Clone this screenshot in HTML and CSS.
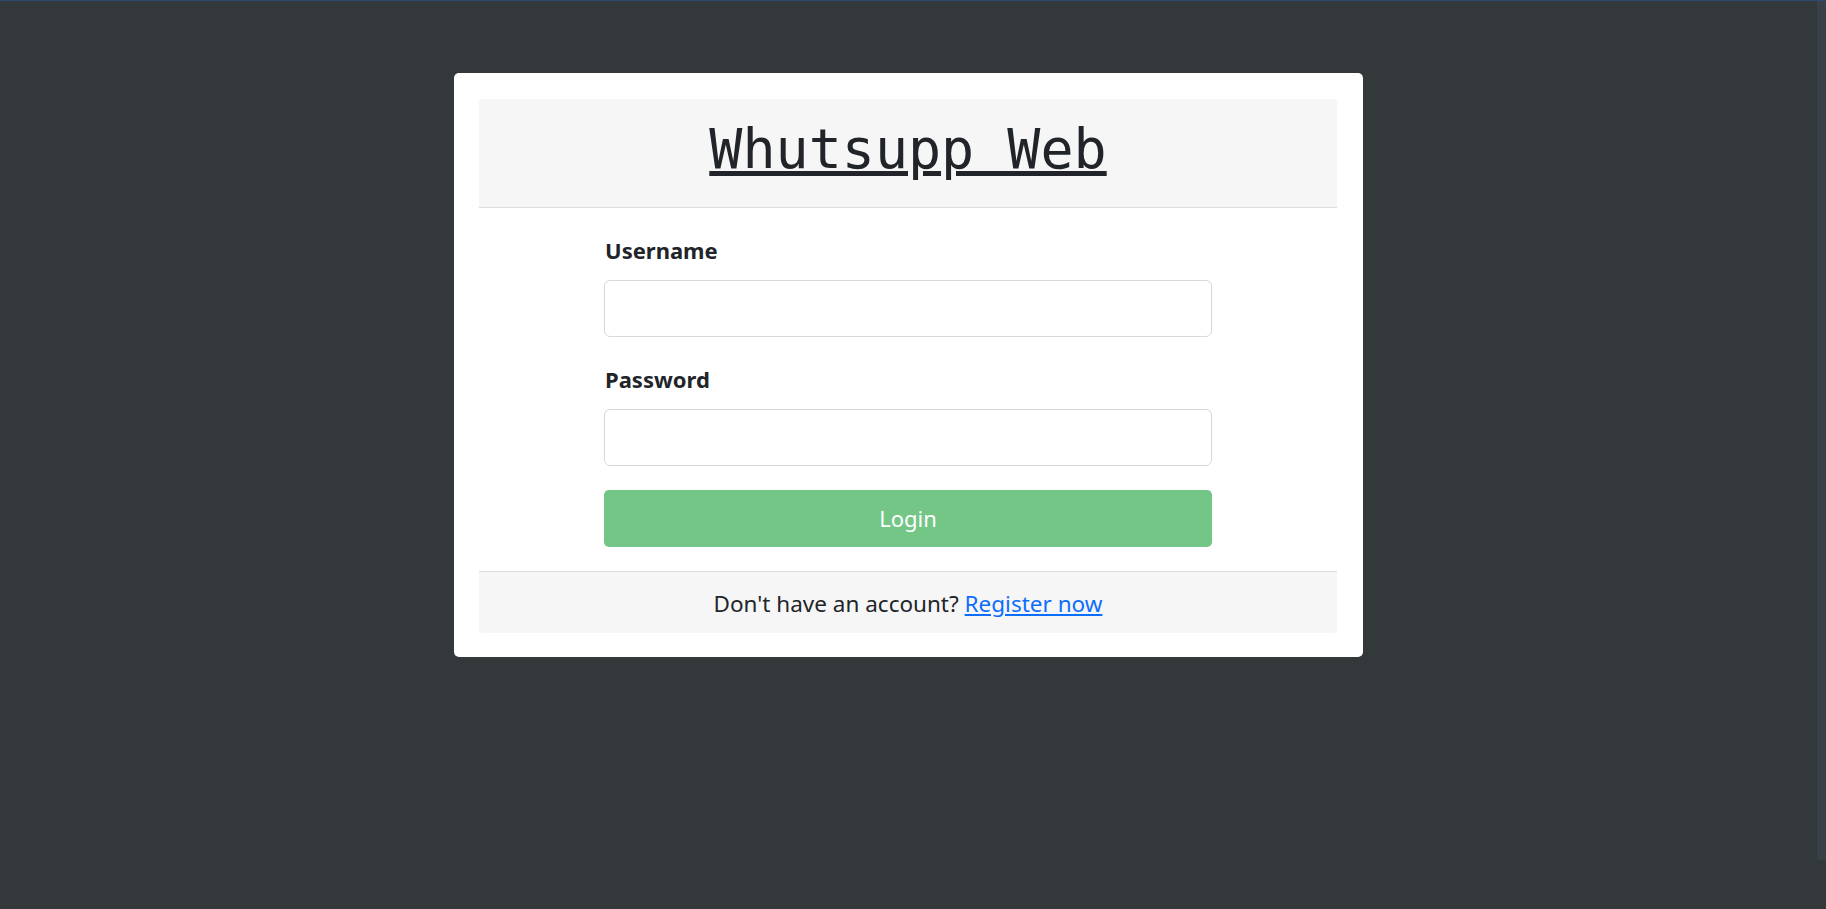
FILE: index.html
```html
<!DOCTYPE html>
<html lang="en">
<head>
<meta charset="utf-8">
<title>Whutsupp Web</title>
<link rel="stylesheet" href="styles.css">
</head>
<body>
<div class="topline"></div>
<div class="scrollbar"></div>
<main class="page">
  <div class="card">
    <div class="card-header">
      <h1 class="title">Whutsupp Web</h1>
    </div>
    <div class="card-body">
      <form class="login-form">
        <label class="form-label" for="username">Username</label>
        <input class="form-input" id="username" type="text">
        <label class="form-label second" for="password">Password</label>
        <input class="form-input" id="password" type="password">
        <button class="btn-login" type="button" disabled>Login</button>
      </form>
    </div>
    <div class="card-footer">
      Don't have an account? <a class="link" href="#">Register now</a>
    </div>
  </div>
</main>
</body>
</html>
```
FILE: styles.css
```css
html, body {
  margin: 0;
  padding: 0;
  height: 100%;
}
body {
  background: #33383b;
  font-family: "Noto Sans", "Open Sans", sans-serif;
  color: #212529;
  overflow: hidden;
}
.topline {
  height: 1px;
  background: #2d4a70;
}
.scrollbar {
  position: fixed;
  top: 1px;
  right: 0;
  width: 9px;
  height: 859px;
  background: #3a4047;
}
.page {
  padding-right: 9px;
  padding-top: 72px;
  display: flex;
  justify-content: center;
}
.card {
  width: 50%;
  box-sizing: border-box;
  background: #fff;
  border-radius: 5px;
  padding: 26px 26px 24px 25px;
}
.card-header {
  background: #f6f6f6;
  border-bottom: 1px solid #dcdcdc;
  border-radius: 4px 4px 0 0;
  padding: 17px 0 25px;
  text-align: center;
}
.title {
  margin: 0;
  font-family: "DejaVu Sans Mono", monospace;
  font-weight: 400;
  font-size: 55px;
  line-height: 66px;
  color: #212529;
  text-decoration: underline;
  text-decoration-thickness: 5px;
  text-underline-offset: 3px;
}
.card-body {
  padding: 26px 0 24px;
}
.login-form {
  width: 608px;
  margin: 0 auto;
  display: flex;
  flex-direction: column;
}
.form-label {
  font-size: 22px;
  line-height: 33px;
  font-weight: 700;
  margin-bottom: 13px;
  padding-left: 1px;
}
.form-label.second {
  margin-top: 26px;
}
.form-input {
  box-sizing: border-box;
  height: 57px;
  width: 100%;
  border: 1px solid #d6d8dc;
  border-radius: 6px;
  background: #fff;
  font-family: inherit;
  font-size: 22px;
  padding: 0 16px;
  outline: none;
}
.btn-login {
  margin-top: 24px;
  height: 57px;
  width: 100%;
  border: none;
  border-radius: 5px;
  background: #73c686;
  color: #fff;
  font-family: inherit;
  font-size: 22px;
  line-height: 33px;
}
.card-footer {
  background: #f6f6f6;
  border-top: 1px solid #dcdcdc;
  border-radius: 0 0 4px 4px;
  padding: 15px 0 12px;
  text-align: center;
  font-size: 22.5px;
  line-height: 34px;
}
.link {
  color: #0d6efd;
  text-decoration: underline;
}
```
